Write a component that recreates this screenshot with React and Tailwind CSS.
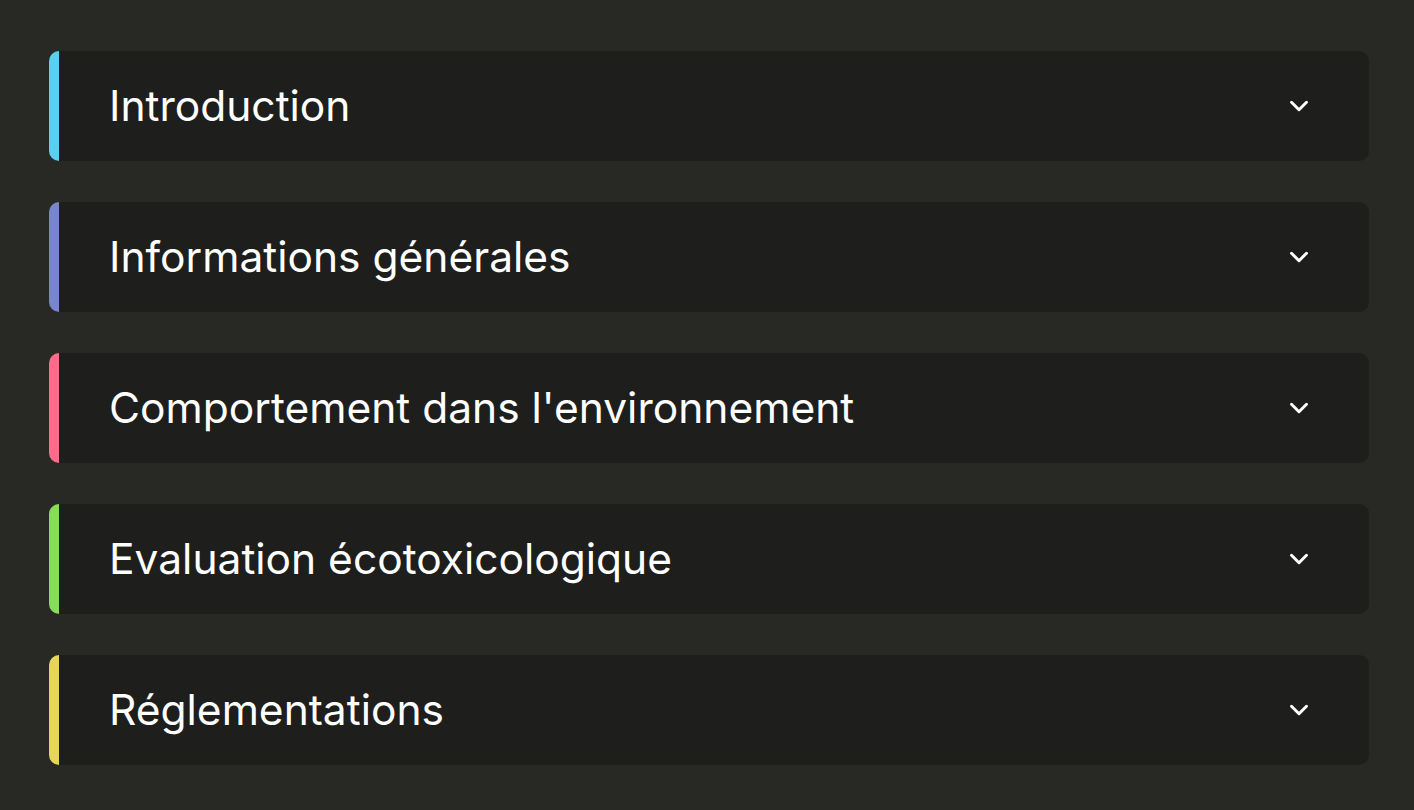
import { ChevronDown } from 'lucide-react';

const sections = [
  { title: 'Introduction', border: 'border-[#5ccff0]' },
  { title: 'Informations générales', border: 'border-[#7986cb]' },
  { title: "Comportement dans l'environnement", border: 'border-[#ff6b8b]' },
  { title: 'Evaluation écotoxicologique', border: 'border-[#86dd5c]' },
  { title: 'Réglementations', border: 'border-[#e5d65a]' },
];

const App = () => {
  return (
    <div className="min-h-screen bg-[#282824] pl-[49px] pr-[45px] pt-[51px] pb-[45px] font-['Inter',sans-serif]">
      <div className="flex flex-col gap-[41px]">
        {sections.map((s) => (
          <button
            key={s.title}
            type="button"
            className={`flex h-[110px] items-center justify-between rounded-[10px] border-l-[10px] ${s.border} bg-[#1e1e1c] pl-[50px] pr-[55px] text-left`}
          >
            <span className="text-[42.5px] font-normal leading-none text-white">{s.title}</span>
            <ChevronDown className="h-[30px] w-[30px] text-white" strokeWidth={2.4} />
          </button>
        ))}
      </div>
    </div>
  );
};

export default App;
